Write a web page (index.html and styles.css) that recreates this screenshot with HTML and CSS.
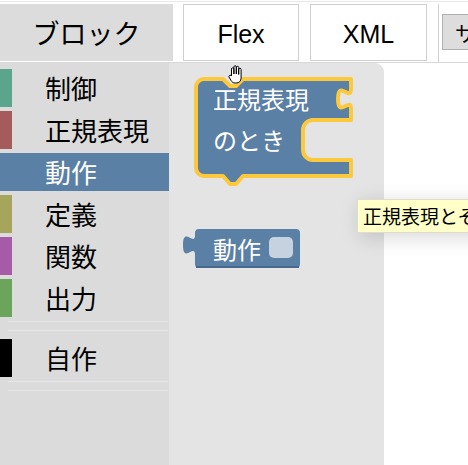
FILE: index.html
```html
<!DOCTYPE html>
<html lang="ja">
<head>
<meta charset="utf-8">
<title>Blocks</title>
<link rel="stylesheet" href="styles.css">
</head>
<body>
<header class="tabs">
  <div class="tab tab-on">ブロック</div>
  <div class="tab tab-off tab-flex">Flex</div>
  <div class="tab tab-off tab-xml">XML</div>
  <div class="tab-rest"><button class="sample-btn">サンプル</button></div>
</header>
<main class="workspace">
  <nav class="toolbox">
    <div class="row"><span class="bar c-teal"></span><span class="label">制御</span></div>
    <div class="row"><span class="bar c-red"></span><span class="label">正規表現</span></div>
    <div class="row row-selected"><span class="bar c-blue"></span><span class="label">動作</span></div>
    <div class="row"><span class="bar c-olive"></span><span class="label">定義</span></div>
    <div class="row"><span class="bar c-purple"></span><span class="label">関数</span></div>
    <div class="row"><span class="bar c-green"></span><span class="label">出力</span></div>
    <div class="sep"></div>
    <div class="row"><span class="bar c-black"></span><span class="label">自作</span></div>
    <div class="sep sep-last"></div>
  </nav>
  <section class="flyout">
    <svg class="flyout-svg" width="215" height="402" viewBox="169 63 215 402" xmlns="http://www.w3.org/2000/svg">
      <path class="blk-selected" d="M196,87 A8,8 0 0 1 204,79 H223 l7,7 h6 l7,-7 H351 V89 c0,13 -13,-10 -13,10 s13,-3 13,10 V120 H313 A10,10 0 0 0 303,130 V150 A10,10 0 0 0 313,160 H351 V176 H243 l-7,8 h-6 l-7,-8 H204 A8,8 0 0 1 196,168 Z"/>
      <text class="blk-text" x="213" y="109">正規表現</text>
      <text class="blk-text" x="213" y="150">のとき</text>
      <path class="blk" d="M199,229 H296 A4,4 0 0 1 300,233 V264 A4,4 0 0 1 296,268 H199 A4,4 0 0 1 195,264 V255 c0,-12 -12,9 -12,-10 s12,2 12,-10 V233 A4,4 0 0 1 199,229 Z"/>
      <path class="blk-shadow" d="M196,267 H299"/>
      <text class="blk-text" x="213" y="259">動作</text>
      <rect class="blk-field" x="269" y="237" width="24" height="21" rx="5"/>
    </svg>
  </section>
  <div class="canvas"></div>
</main>
<svg class="cursor" width="18" height="22" viewBox="0 0 18 22" xmlns="http://www.w3.org/2000/svg">
  <path d="M4.5,12 V5 a1.2,1.2 0 0 1 2.4,0 V10 V3 a1.2,1.2 0 0 1 2.4,0 V10 V3.5 a1.2,1.2 0 0 1 2.4,0 V10.5 V5.5 a1.2,1.2 0 0 1 2.4,0 V14 c0,3 -2,5 -5,5 h-1 c-2,0 -3,-1 -4,-2.5 L2,13 a1.3,1.3 0 0 1 2,-1.5 Z" fill="#fff" stroke="#000" stroke-width="1"/>
</svg>
<div class="tooltip">正規表現とその処理を定義します</div>
</body>
</html>
```
FILE: styles.css
```css
html, body {
  margin: 0;
  padding: 0;
  width: 468px;
  height: 465px;
  overflow: hidden;
  background: #fff;
  font-family: "Liberation Sans", "Noto Sans CJK JP", sans-serif;
}

.tabs {
  display: flex;
  margin-top: 1px;
  border-top: 1px solid #e8e8e8;
  padding-top: 2px;
  height: 58px;
  border-bottom: 1px solid #d8d8d8;
}

.tab {
  box-sizing: border-box;
  height: 57px;
  display: flex;
  align-items: center;
  justify-content: center;
  font-size: 26px;
  color: #000;
}

.tab-on {
  width: 173px;
  background: #dcdcdc;
  font-size: 27px;
  padding-bottom: 1px;
}

.tab-off {
  border: 1px solid #d0d0d0;
  background: #fff;
  font-size: 25px;
  padding-top: 4px;
}

.tab-flex {
  margin-left: 10px;
  width: 116px;
}

.tab-xml {
  margin-left: 11px;
  width: 117px;
}

.tab-rest {
  margin-left: 11px;
  flex: 1;
  border-left: 1px solid #d0d0d0;
  padding-left: 3px;
  padding-top: 10px;
  overflow: hidden;
}

.sample-btn {
  box-sizing: border-box;
  height: 36px;
  padding: 0 12px;
  background: #dddddd;
  border: 1px solid #b0b0b0;
  font-family: "Noto Sans CJK JP", sans-serif;
  font-size: 21px;
  color: #000;
  white-space: nowrap;
  line-height: 1;
}

.workspace {
  display: flex;
  height: 402px;
}

.toolbox {
  width: 169px;
  flex: none;
  background: #dbdbdb;
  padding-top: 6px;
  box-sizing: border-box;
}

.row {
  display: flex;
  align-items: center;
  height: 38px;
  margin-bottom: 4px;
}

.bar {
  width: 12px;
  height: 100%;
  flex: none;
}

.label {
  margin-left: 33px;
  font-family: "Noto Sans CJK JP", sans-serif;
  font-size: 26px;
  line-height: 1;
  color: #000;
}

.row-selected {
  background: #5b80a5;
}

.row-selected .label {
  color: #fff;
}

.c-teal { background: #5ba58c; }
.c-red { background: #a55b5b; }
.c-blue { background: #5b80a5; }
.c-olive { background: #a5a55b; }
.c-purple { background: #a55ba5; }
.c-green { background: #6ba55b; }
.c-black { background: #000; }

.sep {
  margin: 2px 1px 8px 8px;
  height: 8px;
  border-top: 1px solid #e6e6e6;
  border-bottom: 1px solid #e6e6e6;
}

.sep-last {
  margin-top: 4px;
}

.flyout {
  width: 215px;
  flex: none;
  background: #e4e4e4;
  border-top-right-radius: 9px;
}

.flyout-svg {
  display: block;
}

.blk-selected {
  fill: #5b80a5;
  stroke: #fcc93c;
  stroke-width: 4;
  stroke-linejoin: round;
}

.blk {
  fill: #5b80a5;
}

.blk-shadow {
  stroke: #47698d;
  stroke-width: 2;
  fill: none;
}

.blk-field {
  fill: #c7d2e0;
}

.blk-text {
  fill: #fff;
  font-family: "Noto Sans CJK JP", sans-serif;
  font-size: 24px;
}

.canvas {
  flex: 1;
  background: #fff;
}

.cursor {
  position: absolute;
  left: 227px;
  top: 64px;
}

.tooltip {
  position: absolute;
  left: 357px;
  top: 199px;
  height: 34px;
  box-sizing: border-box;
  padding: 3px 5px 0;
  background: #ffffc7;
  border: 1px solid #ddddcc;
  box-shadow: 4px 4px 20px 1px rgba(0, 0, 0, 0.15);
  font-family: "Noto Sans CJK JP", sans-serif;
  font-size: 19px;
  line-height: 26px;
  color: #000;
  white-space: nowrap;
}
```
